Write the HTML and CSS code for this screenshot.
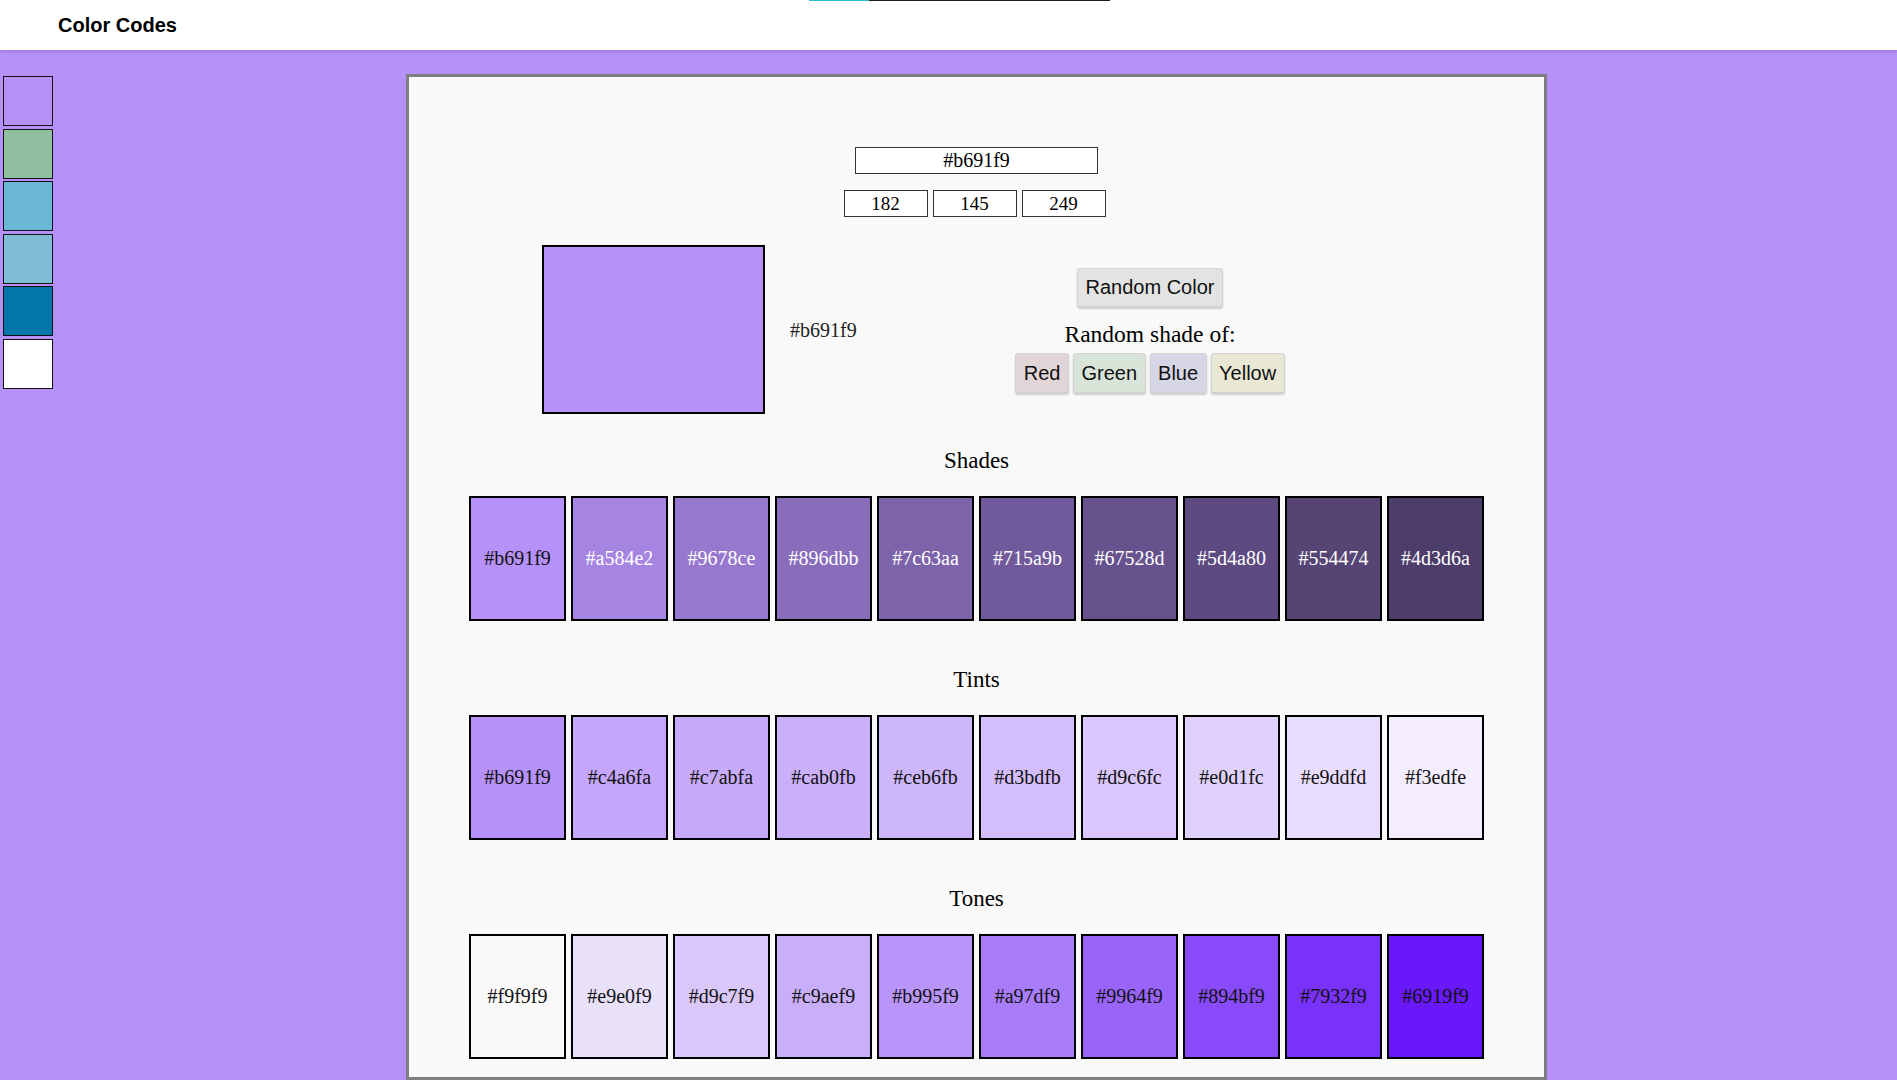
FILE: index.html
```html
<!DOCTYPE html>
<html lang="en">
<head>
<meta charset="utf-8">
<title>Color Codes</title>
<link rel="stylesheet" href="styles.css">
</head>
<body>
<div class="topline"><span class="seg-a"></span><span class="seg-b"></span></div>
<header class="header">
  <h1 class="brand">Color Codes</h1>
</header>
<div class="content">
  <aside class="sidebar">
    <div class="chip" style="background:#b691f9"></div>
    <div class="chip" style="background:#8fbf9f"></div>
    <div class="chip" style="background:#6cb6d6"></div>
    <div class="chip" style="background:#7fbcd6"></div>
    <div class="chip" style="background:#0077a8"></div>
    <div class="chip" style="background:#ffffff"></div>
  </aside>
  <main class="main">
    <section class="panel">
      <div class="inputs">
        <input class="hex-input" type="text" value="#b691f9">
        <div class="rgb-row">
          <input class="rgb-input" type="text" value="182">
          <input class="rgb-input" type="text" value="145">
          <input class="rgb-input" type="text" value="249">
        </div>
      </div>
      <div class="preview-row">
        <div class="preview-left">
          <div class="preview-box"></div>
          <span class="preview-label">#b691f9</span>
        </div>
        <div class="preview-right">
          <button class="btn btn-random">Random Color</button>
          <div class="shade-label">Random shade of:</div>
          <div class="shade-btns">
            <button class="btn btn-red">Red</button>
            <button class="btn btn-green">Green</button>
            <button class="btn btn-blue">Blue</button>
            <button class="btn btn-yellow">Yellow</button>
          </div>
        </div>
      </div>

      <div class="group">
        <h2 class="group-title">Shades</h2>
        <div class="swatches">
          <div class="swatch dark-text" style="background:#b691f9">#b691f9</div>
          <div class="swatch light-text" style="background:#a584e2">#a584e2</div>
          <div class="swatch light-text" style="background:#9678ce">#9678ce</div>
          <div class="swatch light-text" style="background:#896dbb">#896dbb</div>
          <div class="swatch light-text" style="background:#7c63aa">#7c63aa</div>
          <div class="swatch light-text" style="background:#715a9b">#715a9b</div>
          <div class="swatch light-text" style="background:#67528d">#67528d</div>
          <div class="swatch light-text" style="background:#5d4a80">#5d4a80</div>
          <div class="swatch light-text" style="background:#554474">#554474</div>
          <div class="swatch light-text" style="background:#4d3d6a">#4d3d6a</div>
        </div>
      </div>

      <div class="group">
        <h2 class="group-title">Tints</h2>
        <div class="swatches">
          <div class="swatch dark-text" style="background:#b691f9">#b691f9</div>
          <div class="swatch dark-text" style="background:#c4a6fa">#c4a6fa</div>
          <div class="swatch dark-text" style="background:#c7abfa">#c7abfa</div>
          <div class="swatch dark-text" style="background:#cab0fb">#cab0fb</div>
          <div class="swatch dark-text" style="background:#ceb6fb">#ceb6fb</div>
          <div class="swatch dark-text" style="background:#d3bdfb">#d3bdfb</div>
          <div class="swatch dark-text" style="background:#d9c6fc">#d9c6fc</div>
          <div class="swatch dark-text" style="background:#e0d1fc">#e0d1fc</div>
          <div class="swatch dark-text" style="background:#e9ddfd">#e9ddfd</div>
          <div class="swatch dark-text" style="background:#f3edfe">#f3edfe</div>
        </div>
      </div>

      <div class="group">
        <h2 class="group-title">Tones</h2>
        <div class="swatches">
          <div class="swatch dark-text" style="background:#f9f9f9">#f9f9f9</div>
          <div class="swatch dark-text" style="background:#e9e0f9">#e9e0f9</div>
          <div class="swatch dark-text" style="background:#d9c7f9">#d9c7f9</div>
          <div class="swatch dark-text" style="background:#c9aef9">#c9aef9</div>
          <div class="swatch dark-text" style="background:#b995f9">#b995f9</div>
          <div class="swatch dark-text" style="background:#a97df9">#a97df9</div>
          <div class="swatch dark-text" style="background:#9964f9">#9964f9</div>
          <div class="swatch dark-text" style="background:#894bf9">#894bf9</div>
          <div class="swatch dark-text" style="background:#7932f9">#7932f9</div>
          <div class="swatch dark-text" style="background:#6919f9">#6919f9</div>
        </div>
      </div>
    </section>
  </main>
</div>
</body>
</html>
```
FILE: styles.css
```css
html {
  overflow: hidden;
}

body {
  margin: 0;
  background: #b691f9;
  font-family: "Liberation Serif", "Times New Roman", serif;
  color: #000;
  position: relative;
  height: 1080px;
}

.topline {
  position: absolute;
  top: 0;
  left: 809px;
  display: flex;
  height: 1px;
  z-index: 5;
}

.seg-a {
  width: 60px;
  background: #2bbccc;
}

.seg-b {
  width: 241px;
  background: #1e1e1e;
}

.header {
  height: 50px;
  background: #ffffff;
  display: flex;
  align-items: center;
  padding-left: 58px;
  box-shadow: 0 1px 4px rgba(0, 0, 0, 0.22);
  position: relative;
  z-index: 2;
}

.brand {
  margin: 0;
  font-family: "Liberation Sans", Arial, sans-serif;
  font-size: 20px;
  font-weight: bold;
  line-height: 24px;
  padding-bottom: 1px;
}

.content {
  display: flex;
}

.sidebar {
  width: 56px;
  padding: 26px 3px 0;
  box-sizing: border-box;
  display: flex;
  flex-direction: column;
  gap: 2.6px;
  flex-shrink: 0;
}

.chip {
  width: 50px;
  height: 50px;
  box-sizing: border-box;
  border: 1px solid #111;
}

.main {
  flex: 1;
  display: flex;
  justify-content: center;
}

.panel {
  margin-top: 24px;
  width: 1141px;
  box-sizing: border-box;
  background: #f9f9f9;
  border: 3px solid #7e7e82;
  padding: 70px 0 18px;
}

.inputs {
  display: flex;
  flex-direction: column;
  align-items: center;
  gap: 16px;
}

.hex-input,
.rgb-input {
  box-sizing: border-box;
  height: 27px;
  border: 1px solid #333;
  background: #fff;
  text-align: center;
  font-family: "Liberation Serif", "Times New Roman", serif;
  color: #000;
  padding: 0;
  margin: 0;
}

.hex-input {
  width: 243px;
  font-size: 20px;
}

.rgb-row {
  display: flex;
  gap: 5px;
  margin-right: 4px;
}

.rgb-input {
  width: 84px;
  font-size: 19px;
}

.preview-row {
  margin-top: 28px;
  display: flex;
  justify-content: center;
  align-items: center;
  height: 169px;
}

.preview-left {
  width: 347px;
  display: flex;
  align-items: center;
  gap: 25px;
}

.preview-box {
  width: 223px;
  height: 169px;
  box-sizing: border-box;
  border: 2px solid #000;
  background: #b691f9;
}

.preview-label {
  font-size: 20px;
  color: #222;
  padding-top: 2px;
}

.preview-right {
  width: 522px;
  display: flex;
  flex-direction: column;
  align-items: center;
  padding-top: 2px;
}

.btn {
  font-family: "Liberation Sans", Arial, sans-serif;
  font-size: 20px;
  color: #111;
  border: 1px solid #d2d2d2;
  border-radius: 3px;
  padding: 0 7.5px;
  margin: 0;
  box-shadow: 0 2px 2px rgba(0, 0, 0, 0.18);
  cursor: pointer;
}

.btn-random {
  height: 39px;
  padding: 0 8px;
  background: #e3e3e3;
}

.shade-label {
  font-size: 23.5px;
  line-height: 27px;
  margin: 14px 0 5px;
}

.shade-btns {
  display: flex;
  gap: 4px;
}

.shade-btns .btn {
  height: 40px;
}

.btn-red {
  background: #e2d5d8;
}

.btn-green {
  background: #d8e4d8;
}

.btn-blue {
  background: #d6d6e6;
}

.btn-yellow {
  background: #e8e8d4;
}

.group {
  margin-top: 34px;
}

.group + .group {
  margin-top: 46px;
}

.group-title {
  margin: 0 0 22px;
  font-size: 23px;
  font-weight: normal;
  line-height: 26px;
  text-align: center;
}

.swatches {
  display: flex;
  justify-content: center;
  gap: 5px;
}

.swatch {
  width: 97px;
  height: 125px;
  box-sizing: border-box;
  border: 2px solid #000;
  display: flex;
  align-items: center;
  justify-content: center;
  font-size: 20px;
}

.dark-text {
  color: #111;
}

.light-text {
  color: #fff;
}
```
